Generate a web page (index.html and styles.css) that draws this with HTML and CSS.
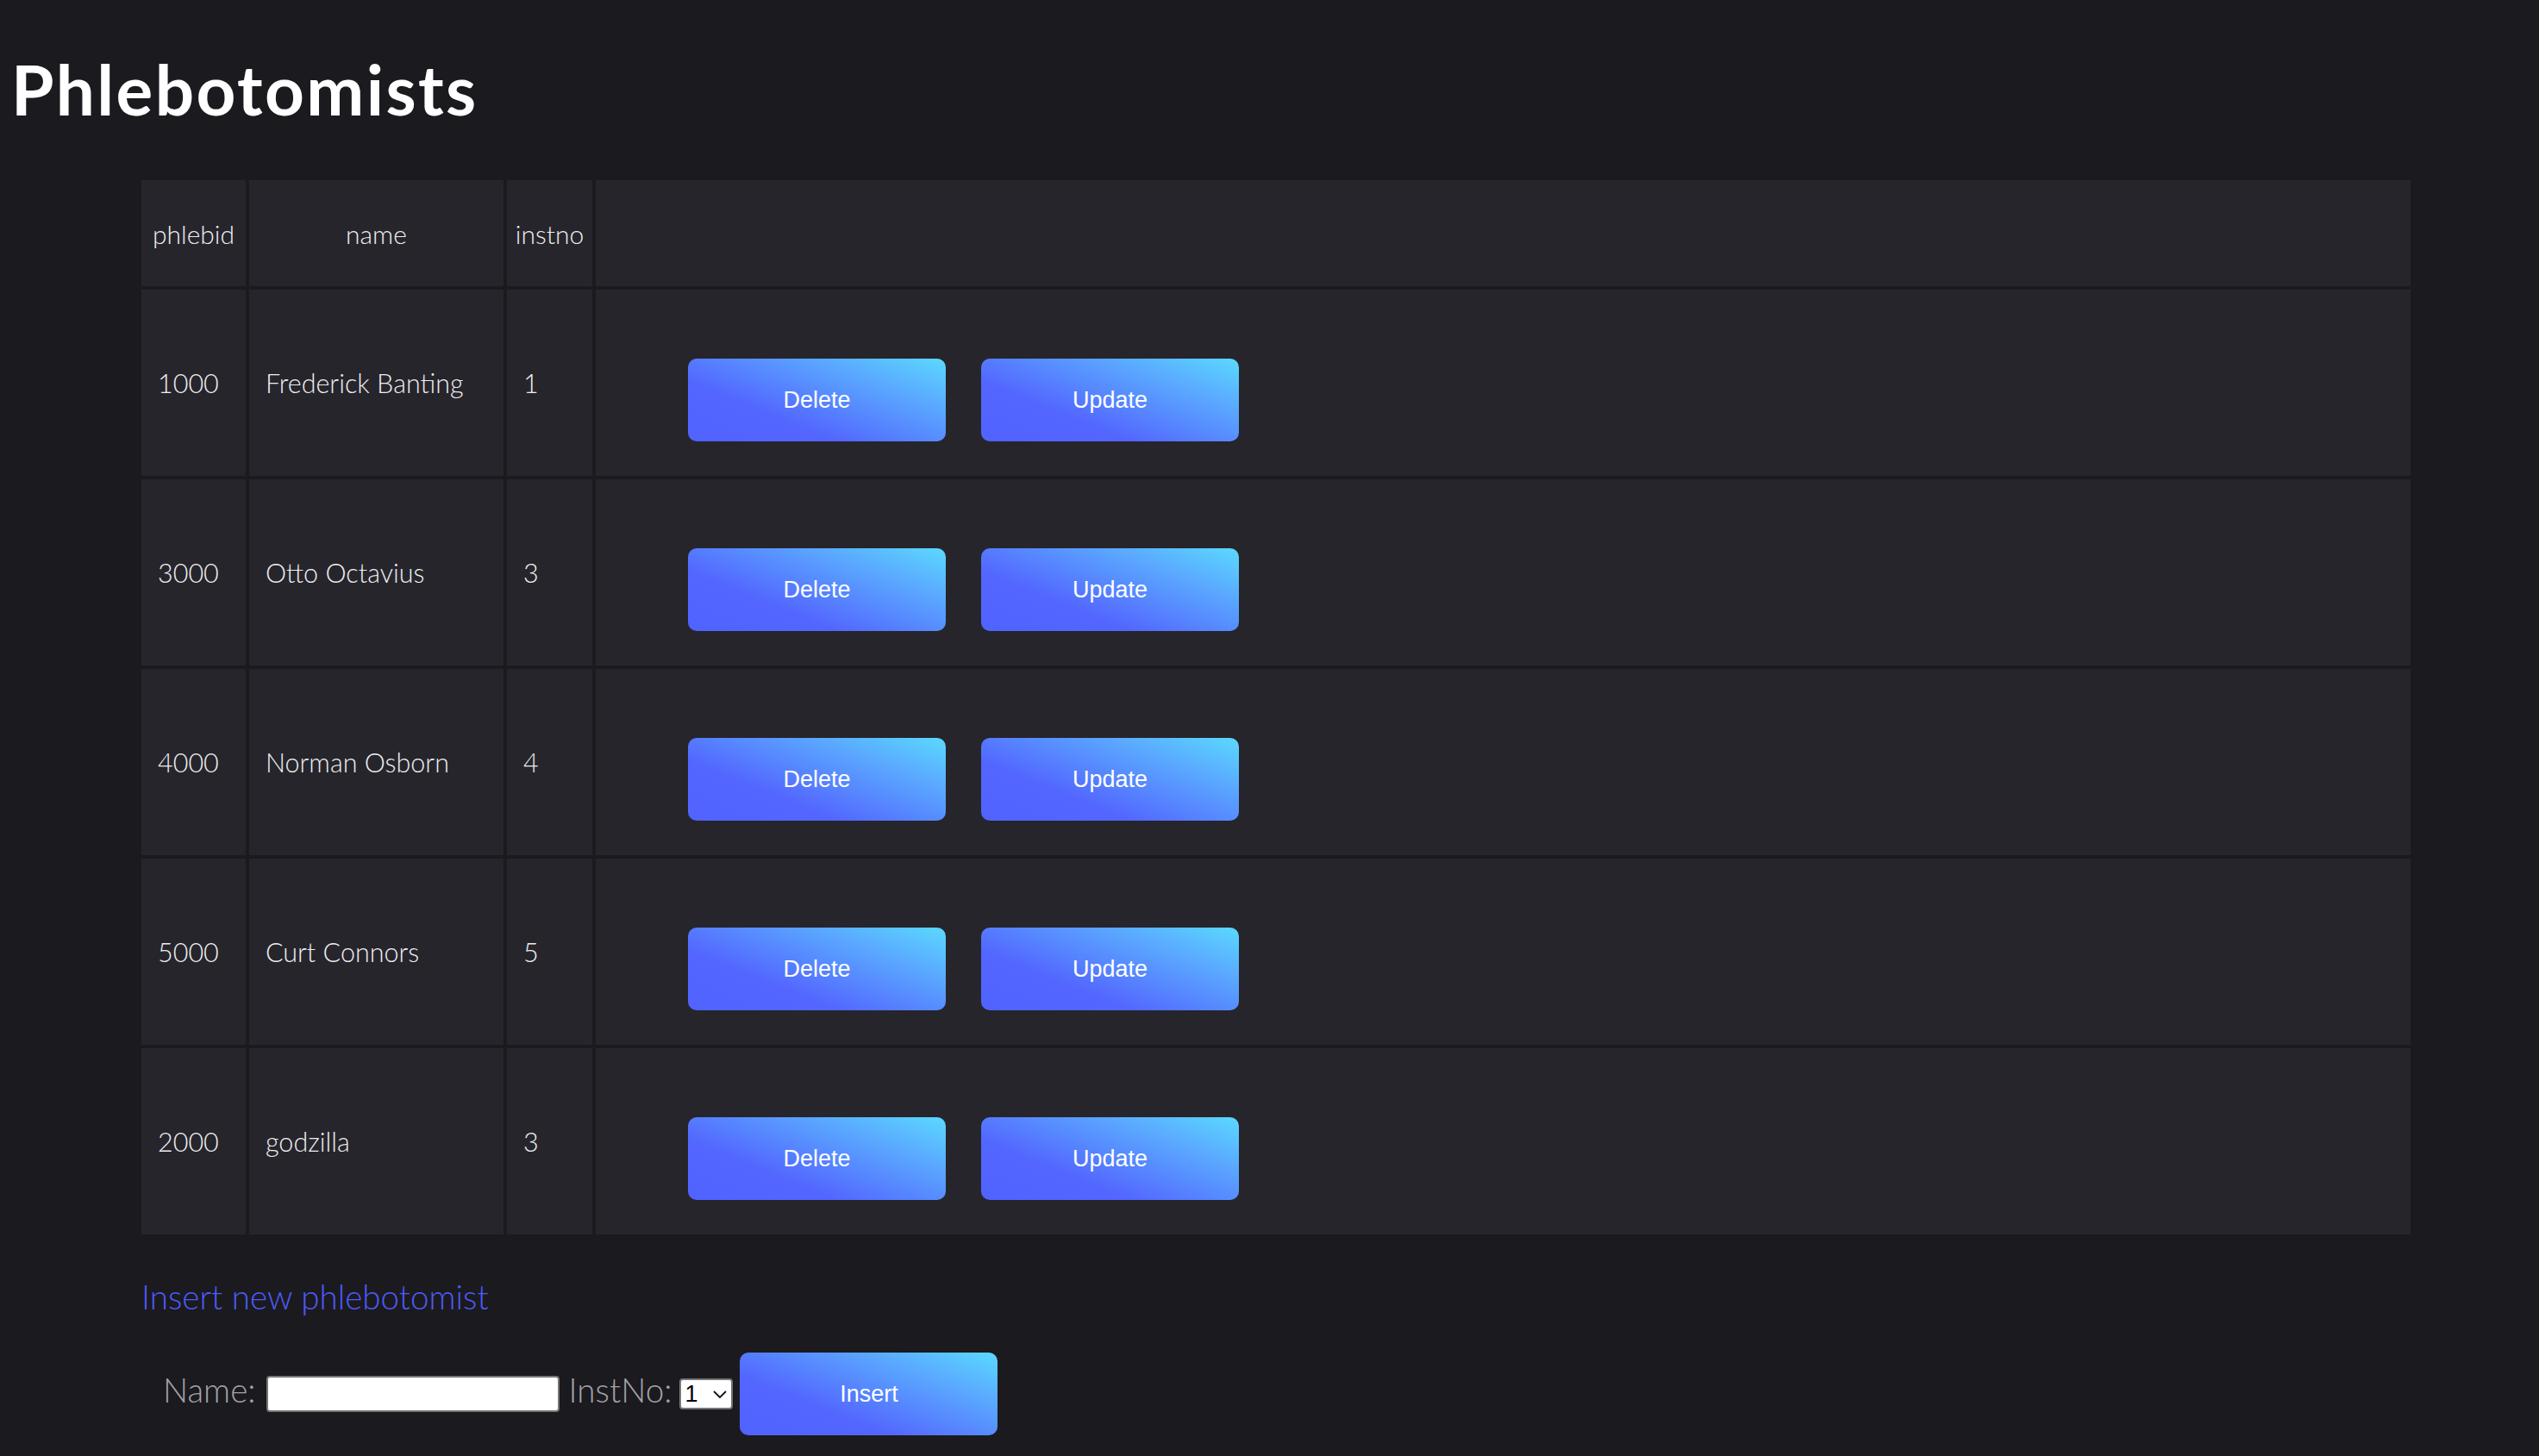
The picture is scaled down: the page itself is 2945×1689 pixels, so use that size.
FILE: index.html
```html
<!DOCTYPE html>
<html lang="en">
<head>
<meta charset="utf-8">
<title>Phlebotomists</title>
<link rel="stylesheet" href="styles.css">
</head>
<body>
<h1 class="title">Phlebotomists</h1>
<table class="grid">
  <thead>
    <tr class="head-row">
      <th class="c-id">phlebid</th>
      <th class="c-name">name</th>
      <th class="c-inst">instno</th>
      <th class="c-actions"></th>
    </tr>
  </thead>
  <tbody>
    <tr class="data-row">
      <td>1000</td><td>Frederick Banting</td><td>1</td>
      <td class="actions"><div class="btns"><button class="btn">Delete</button><button class="btn">Update</button></div></td>
    </tr>
    <tr class="data-row">
      <td>3000</td><td>Otto Octavius</td><td>3</td>
      <td class="actions"><div class="btns"><button class="btn">Delete</button><button class="btn">Update</button></div></td>
    </tr>
    <tr class="data-row">
      <td>4000</td><td>Norman Osborn</td><td>4</td>
      <td class="actions"><div class="btns"><button class="btn">Delete</button><button class="btn">Update</button></div></td>
    </tr>
    <tr class="data-row">
      <td>5000</td><td>Curt Connors</td><td>5</td>
      <td class="actions"><div class="btns"><button class="btn">Delete</button><button class="btn">Update</button></div></td>
    </tr>
    <tr class="data-row">
      <td>2000</td><td>godzilla</td><td>3</td>
      <td class="actions"><div class="btns"><button class="btn">Delete</button><button class="btn">Update</button></div></td>
    </tr>
  </tbody>
</table>
<a class="insert-link" href="#">Insert new phlebotomist</a>
<form class="insert-form">
  <label class="lbl" for="nm">Name:</label>
  <input class="txt" id="nm" type="text">
  <label class="lbl" for="inst">InstNo:</label>
  <span class="sel-wrap">
    <select class="sel" id="inst">
      <option>1</option><option>2</option><option>3</option><option>4</option><option>5</option>
    </select>
    <svg class="chev" width="18" height="11" viewBox="0 0 18 11" aria-hidden="true"><path d="M2 2 L9 9 L16 2" fill="none" stroke="#111" stroke-width="1.8"/></svg>
  </span>
  <button class="btn btn-insert" type="button">Insert</button>
</form>
</body>
</html>
```
FILE: styles.css
```css
html {
  background: #1b1a1f;
}
body {
  margin: 0;
  background: #1b1a1f;
  color: #eeeef0;
  font-family: "Lato", "Segoe UI", sans-serif;
  font-weight: 300;
}
.title {
  margin: 56px 0 0 0;
  padding-left: 13px;
  font-family: "Lato", sans-serif;
  font-weight: 700;
  font-size: 80px;
  letter-spacing: 2.4px;
  line-height: 94px;
  color: #ffffff;
}
.grid {
  margin: 55px 0 0 160px;
  width: 2640px;
  border-spacing: 4px;
  border-collapse: separate;
  font-size: 30px;
}
.grid th,
.grid td {
  background: #26252c;
  padding: 0;
}
.grid th {
  font-weight: 300;
  text-align: center;
  height: 123px;
}
.c-id { width: 121px; }
.c-name { width: 295px; }
.c-inst { width: 99px; }
.grid td {
  text-align: left;
  padding-left: 19px;
  height: 216px;
  font-size: 30.5px;
}
.grid td.actions {
  padding-left: 107px;
}
.btns {
  display: flex;
  gap: 41px;
  padding-top: 40px;
}
.btn {
  width: 299px;
  height: 96px;
  border: none;
  border-radius: 10px;
  background: linear-gradient(22deg, #5063ff 0%, #5366ff 32%, #5aa8ff 72%, #5bd9ff 100%);
  color: #ffffff;
  font-family: "Liberation Sans", Arial, sans-serif;
  font-size: 27px;
  font-weight: 400;
  padding: 0;
  cursor: pointer;
}
.insert-link {
  display: block;
  margin: 45px 0 0 164px;
  font-size: 38.6px;
  line-height: 46px;
  color: #4d5bfb;
  text-decoration: none;
  width: max-content;
}
.insert-form {
  display: flex;
  align-items: center;
  margin: 42px 0 0 189px;
}
.lbl {
  font-size: 38.6px;
  line-height: 46px;
  color: #a3a3aa;
  margin-bottom: 10px;
}
.txt {
  box-sizing: border-box;
  width: 340px;
  height: 42px;
  margin: 0 11px 0 12px;
  border: 2px solid #767676;
  border-radius: 4px;
  background: #ffffff;
}
.sel-wrap {
  position: relative;
  display: block;
  width: 62px;
  height: 36px;
  margin: 0 8px 0 9px;
}
.sel {
  box-sizing: border-box;
  width: 62px;
  height: 36px;
  border: 2px solid #767676;
  border-radius: 4px;
  background: #ffffff;
  color: #000000;
  font-family: "Liberation Sans", Arial, sans-serif;
  font-size: 27px;
  padding: 0 0 0 4px;
  appearance: none;
  -webkit-appearance: none;
}
.chev {
  position: absolute;
  right: 6px;
  top: 13px;
  pointer-events: none;
}
```
